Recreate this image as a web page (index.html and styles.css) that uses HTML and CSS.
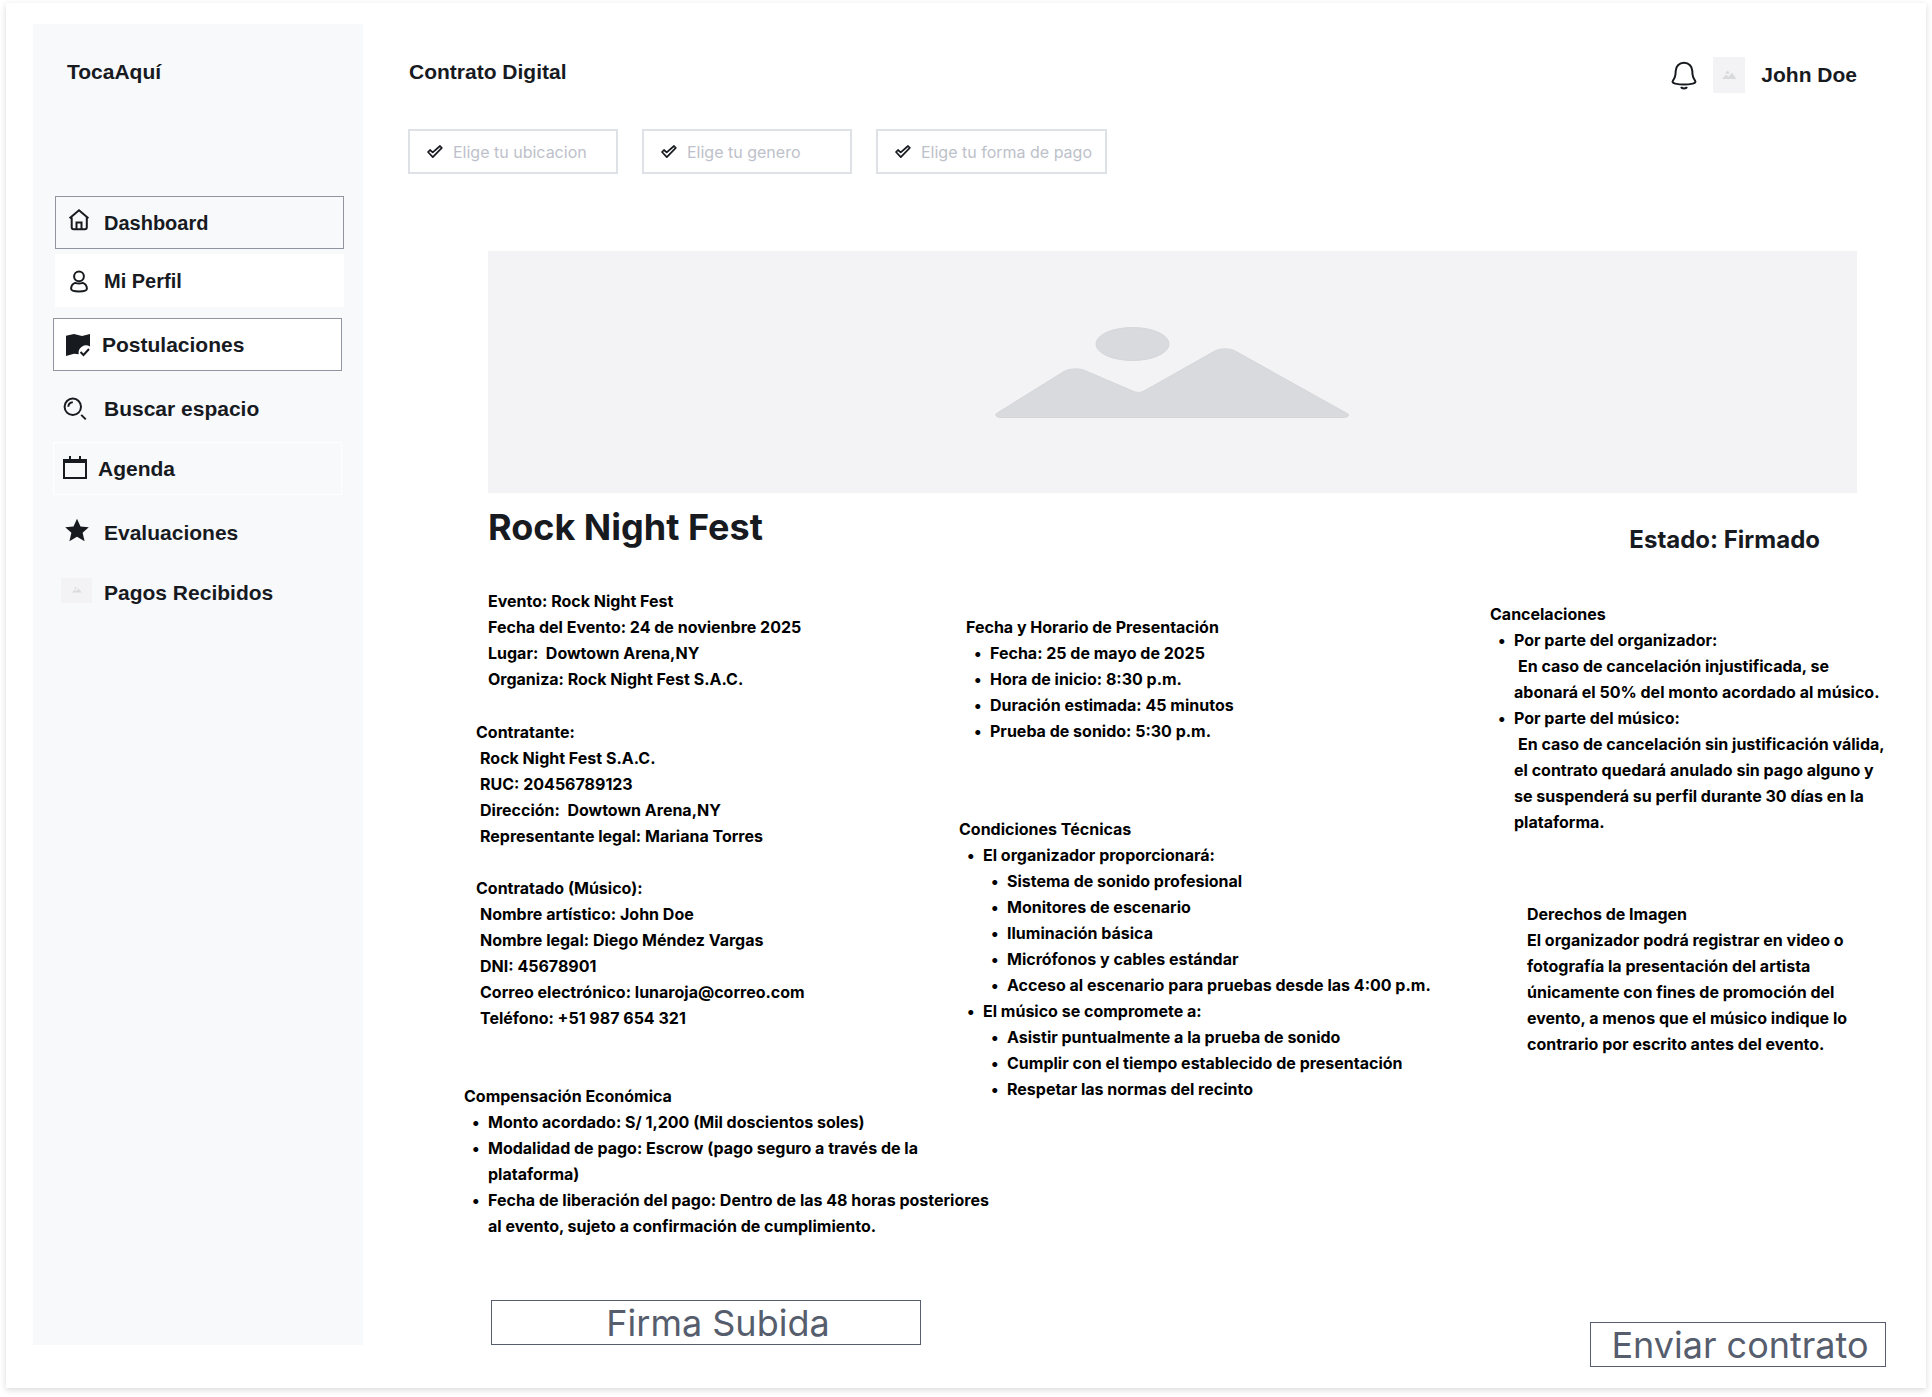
FILE: index.html
```html
<!DOCTYPE html>
<html lang="es">
<head>
<meta charset="utf-8">
<meta name="viewport" content="width=device-width, initial-scale=1">
<title>TocaAquí – Contrato Digital</title>
<link rel="stylesheet" href="styles.css">
</head>
<body>
<div class="card">
  <aside class="sidebar">
    <p class="brand">TocaAquí</p>
    <nav class="nav" aria-label="Principal">
      <a class="nav-item boxed compact" href="#">
        <svg class="nav-icon line" viewBox="0 0 32 31" aria-hidden="true"><path d="M6.600 11.300 16 3.200l9.400 8.100M8.700 10.500v9.800a2 2 0 0 0 2 2h11.100a2 2 0 0 0 2-2v-9.800M13.500 22v-6.600h5V22"/></svg>
        <span>Dashboard</span>
      </a>
      <a class="nav-item filled compact" href="#">
        <svg class="nav-icon line" viewBox="0 0 32 31" aria-hidden="true"><circle cx="16" cy="11.300" r="4.900"/><path d="M12.300 17.900c-2.700.9-4.200 3-4.200 5.800 0 1.900 3 2.700 7.900 2.700s7.900-.8 7.900-2.700c0-2.800-1.500-4.900-4.200-5.800-2.300.8-5.100.8-7.400 0z"/></svg>
        <span>Mi Perfil</span>
      </a>
      <a class="nav-item boxed filled outset spaced" href="#">
        <svg class="nav-icon" viewBox="0 0 32 31" aria-hidden="true"><path fill="#171a1f" d="M5 6.800 13 5l8 2 8-2v12.500a7.500 7.500 0 0 0-11.300 7.800L13 24.800l-8 2.200z"/><path class="stroke" d="m19.500 23 3 3 5.500-6"/></svg>
        <span>Postulaciones</span>
      </a>
      <a class="nav-item spaced" href="#">
        <svg class="nav-icon line" viewBox="0 0 32 31" aria-hidden="true"><circle cx="9.800" cy="13.800" r="8.200"/><path d="M5.300 13.800a4.800 4.800 0 0 1 4.500-4.500M18.200 21.900l4.600 4.500"/></svg>
        <span>Buscar espacio</span>
      </a>
      <a class="nav-item boxed pale outset tight" href="#">
        <svg class="nav-icon" viewBox="0 0 32 31" aria-hidden="true"><path fill="#171a1f" fill-rule="evenodd" d="M2 6h6V3h2v3h8V3h2v3h6v20H2zM4 10v14h20V10z"/></svg>
        <span>Agenda</span>
      </a>
      <a class="nav-item spaced" href="#">
        <svg class="nav-icon" viewBox="0 0 32 31" aria-hidden="true"><path fill="#171a1f" d="m14 1.800 3.500 7.600 8.300.9-6.200 5.500 2 8.500-7.600-4.500-7.600 4.500 2-8.500-6.200-5.500 8.300-.9z"/></svg>
        <span>Evaluaciones</span>
      </a>
      <a class="nav-item tight-top" href="#">
        <svg class="nav-icon" viewBox="0 0 32 31" aria-hidden="true"><path fill="#f3f3f5" d="M-2 1h31v25H-2z"/><path fill="#d9dade" d="m9 15.500 2.500-2.700 1.800 1.400 2.200-2.800 3.300 4.100z"/><circle cx="12.500" cy="11.300" r="1" fill="#d9dade"/></svg>
        <span>Pagos Recibidos</span>
      </a>
    </nav>
  </aside>

  <main class="main">
    <header class="header">
      <h1 class="page-title">Contrato Digital</h1>
      <div class="user">
        <button class="bell" type="button" aria-label="Notificaciones">
          <svg viewBox="0 0 28 30" aria-hidden="true"><path class="stroke" d="M14 2.800c-5 0-8.300 3.600-8.300 8.300 0 4.900-.6 6.700-2.600 9.200-1.600 2 .4 2.900 2.100 3.300 5.600 1.300 12 1.300 17.600 0 1.700-.4 3.700-1.300 2.100-3.300-2-2.500-2.600-4.300-2.600-9.200 0-4.700-3.300-8.300-8.300-8.300zM11 27c.8 1.900 5.200 1.900 6 0"/></svg>
        </button>
        <svg class="avatar" viewBox="0 0 32 36" aria-hidden="true"><path fill="#f3f3f5" d="M0 0h32v36H0z"/><path fill="#d9dade" d="m9 22 4-4.500 2.500 2.300L19 15.700l4.300 6.300z"/><circle cx="14.500" cy="15.500" r="1.600" fill="#d9dade"/></svg>
        <span class="user-name">John Doe</span>
      </div>
    </header>

    <form class="filters">
      <label class="filter">
        <svg class="check" viewBox="0 0 18 16" aria-hidden="true"><path d="m2 8 2-2 2.700 2.400L14 2l1.800 1.800-9 9.400z"/></svg>
        <input type="text" placeholder="Elige tu ubicacion" aria-label="Ubicacion">
      </label>
      <label class="filter">
        <svg class="check" viewBox="0 0 18 16" aria-hidden="true"><path d="m2 8 2-2 2.700 2.400L14 2l1.800 1.800-9 9.400z"/></svg>
        <input type="text" placeholder="Elige tu genero" aria-label="Genero">
      </label>
      <label class="filter wide">
        <svg class="check" viewBox="0 0 18 16" aria-hidden="true"><path d="m2 8 2-2 2.700 2.400L14 2l1.800 1.800-9 9.400z"/></svg>
        <input type="text" placeholder="Elige tu forma de pago" aria-label="Forma de pago">
      </label>
    </form>

    <div class="hero">
      <svg class="hero-art" viewBox="0 0 355 91" aria-hidden="true"><g fill="#d9dade" stroke="#d5d6da"><ellipse cx="137.500" cy="17" rx="36.500" ry="16.500"/><path d="M1.500 86.500 69 44.500c6-3.500 17-3.500 23 0l48 20.500q5 1.500 9-1l70-39.500c5-3.500 17-3.500 22 0l112 62.500q2 2.500-4 3.500H5q-6-1-3.500-4z"/></g></svg>
    </div>

    <div class="event-head">
      <h2 class="event-title">Rock Night Fest</h2>
      <p class="status">Estado: Firmado</p>
    </div>

    <div class="contract">
      <div class="column">
        <section class="block indent-2">
          <p>Evento: Rock Night Fest</p>
          <p>Fecha del Evento: 24 de novienbre 2025</p>
          <p>Lugar:&nbsp; Dowtown Arena,NY</p>
          <p>Organiza: Rock Night Fest S.A.C.</p>
        </section>
        <section class="block indent-1 party">
          <h3>Contratante:</h3>
          <p>Rock Night Fest S.A.C.</p>
          <p>RUC: 20456789123</p>
          <p>Dirección:&nbsp; Dowtown Arena,NY</p>
          <p>Representante legal: Mariana Torres</p>
        </section>
        <section class="block indent-1 party">
          <h3>Contratado (Músico):</h3>
          <p>Nombre artístico: John Doe</p>
          <p>Nombre legal: Diego Méndez Vargas</p>
          <p>DNI: 45678901</p>
          <p>Correo electrónico: lunaroja@correo.com</p>
          <p>Teléfono: +51 987 654 321</p>
        </section>
        <section class="block payment">
          <h3>Compensación Económica</h3>
          <ul>
            <li>Monto acordado: S/ 1,200 (Mil doscientos soles)</li>
            <li>Modalidad de pago: Escrow (pago seguro a través de la plataforma)</li>
            <li>Fecha de liberación del pago: Dentro de las 48 horas posteriores al evento, sujeto a confirmación de cumplimiento.</li>
          </ul>
        </section>
      </div>

      <div class="column middle">
        <section class="block schedule">
          <h3>Fecha y Horario de Presentación</h3>
          <ul>
            <li>Fecha: 25 de mayo de 2025</li>
            <li>Hora de inicio: 8:30 p.m.</li>
            <li>Duración estimada: 45 minutos</li>
            <li>Prueba de sonido: 5:30 p.m.</li>
          </ul>
        </section>
        <section class="block">
          <h3>Condiciones Técnicas</h3>
          <ul>
            <li>El organizador proporcionará:
              <ul>
                <li>Sistema de sonido profesional</li>
                <li>Monitores de escenario</li>
                <li>Iluminación básica</li>
                <li>Micrófonos y cables estándar</li>
                <li>Acceso al escenario para pruebas desde las 4:00 p.m.</li>
              </ul>
            </li>
            <li>El músico se compromete a:
              <ul>
                <li>Asistir puntualmente a la prueba de sonido</li>
                <li>Cumplir con el tiempo establecido de presentación</li>
                <li>Respetar las normas del recinto</li>
              </ul>
            </li>
          </ul>
        </section>
      </div>

      <div class="column right">
        <section class="block">
          <h3>Cancelaciones</h3>
          <ul>
            <li>Por parte del organizador:<p class="clause">En caso de cancelación injustificada, se abonará el 50% del monto acordado al músico.</p></li>
            <li>Por parte del músico:<p class="clause">En caso de cancelación sin justificación válida, el contrato quedará anulado sin pago alguno y se suspenderá su perfil durante 30 días en la plataforma.</p></li>
          </ul>
        </section>
        <section class="block rights">
          <h3>Derechos de Imagen</h3>
          <p>El organizador podrá registrar en video o fotografía la presentación del artista únicamente con fines de promoción del evento, a menos que el músico indique lo contrario por escrito antes del evento.</p>
        </section>
      </div>
    </div>

    <div class="actions">
      <button class="action sign" type="button">Firma Subida</button>
      <button class="action send" type="button">Enviar contrato</button>
    </div>
  </main>
</div>
</body>
</html>
```
FILE: styles.css
```css
* {
  box-sizing: border-box;
}

body {
  margin: 0;
  padding: 3px 6px 9px;
  background: #fff;
  color: #171a1f;
  font-family: Inter, "Liberation Sans", sans-serif;
  font-size: 16px;
  line-height: 26px;
}

h1, h2, h3, p, ul {
  margin: 0;
  padding: 0;
  font-size: inherit;
}

.card {
  display: flex;
  padding: 21px 0 21px 27px;
  background: #fff;
  box-shadow: 0 2px 6px rgba(23, 26, 31, 0.16);
}

/* Sidebar */

.sidebar {
  flex: none;
  width: 330px;
  margin-bottom: 22px;
  padding: 33px 19px 33px 22px;
  background: #f8f9fb;
}

.brand,
.nav-item,
.page-title,
.user-name {
  font-family: "Liberation Sans", Arial, sans-serif;
  font-size: 21px;
  font-weight: 700;
  line-height: 30px;
}

.brand {
  padding-left: 12px;
}

.nav {
  display: flex;
  flex-direction: column;
  margin-top: 109px;
}

.nav-item {
  display: flex;
  align-items: center;
  gap: 9px;
  height: 53px;
  padding-left: 7px;
  border: 1px solid transparent;
  color: inherit;
  text-decoration: none;
}

.nav-item + .nav-item {
  margin-top: 5px;
}

.nav-item.compact {
  font-size: 20px;
}

.nav-item.boxed {
  border-color: #9095a0;
}

.nav-item.filled {
  background: #fff;
}

.nav-item.pale {
  border-color: #fff;
}

.nav-item.outset {
  margin-right: 2px;
  margin-left: -2px;
}

.nav-item + .nav-item.spaced {
  margin-top: 11px;
}

.nav-item + .nav-item.tight,
.nav-item + .nav-item.tight-top {
  margin-top: 7px;
}

.nav-item.tight {
  gap: 5px;
}

.nav-icon {
  flex: none;
  width: 32px;
  height: 31px;
  overflow: visible;
}

.line,
.stroke {
  fill: none;
  stroke: #171a1f;
  stroke-width: 2;
}

/* Header */

.main {
  flex: 1;
  min-width: 0;
  padding: 33px 0 0 46px;
}

.header {
  display: flex;
  align-items: flex-start;
  justify-content: space-between;
  padding-right: 69px;
}

.user {
  display: flex;
  align-items: center;
}

.bell {
  width: 28px;
  height: 30px;
  margin-right: 15px;
  padding: 0;
  border: 0;
  background: none;
}

.bell svg {
  display: block;
}

.avatar {
  width: 32px;
  height: 36px;
  margin-right: 16px;
}

/* Filters */

.filters {
  display: flex;
  gap: 24px;
  margin: 36px 0 0 -1px;
}

.filter {
  display: flex;
  align-items: center;
  gap: 9px;
  width: 210px;
  height: 45px;
  padding: 0 12px 0 16px;
  border: 2px solid #dee1e6;
}

.filter.wide {
  width: 231px;
}

.check {
  flex: none;
  width: 18px;
  height: 16px;
  fill: none;
  stroke: #171a1f;
  stroke-width: 1.7;
  stroke-linejoin: round;
}

.filter input {
  width: 100%;
  min-width: 0;
  padding: 0;
  border: 0;
  outline: 0;
  background: none;
  color: inherit;
  font: 400 16px/26px Inter, "Liberation Sans", sans-serif;
}

.filter input::placeholder {
  color: #bdc1ca;
  opacity: 1;
}

/* Event */

.hero {
  display: flex;
  align-items: center;
  justify-content: center;
  height: 242px;
  margin: 77px 69px 0 79px;
  background: #f3f3f5;
}

.hero-art {
  width: 355px;
  height: 91px;
}

.event-head {
  display: flex;
  align-items: flex-end;
  justify-content: space-between;
  margin: 10px 106px 0 79px;
  font-weight: 700;
}

.event-title {
  font-size: 36px;
  line-height: 48px;
}

.status {
  font-size: 24px;
  line-height: 22px;
}

/* Contract terms */

.contract {
  display: grid;
  grid-template-columns: 495fr 531fr 398fr;
  margin: 37px 38px 0 55px;
  color: #000;
  font-weight: 700;
}

.block h3 {
  font-weight: inherit;
}

.block ul {
  padding-left: 24px;
  list-style: none;
}

.block li::before {
  content: "•";
  display: inline-block;
  width: 16px;
  margin-left: -16px;
}

.party {
  margin-top: 26px;
}

.indent-1 {
  padding-left: 12px;
}

.indent-2 {
  padding: 0 0 1px 24px;
}

.party p {
  padding-left: 4px;
}

.payment {
  margin: 52px -40px 0 0;
}

.middle {
  padding-top: 26px;
}

.schedule {
  margin-bottom: 72px;
  padding-left: 7px;
}

.right {
  padding-top: 13px;
}

.clause {
  text-indent: 4px;
}

.rights {
  margin-top: 66px;
  padding: 0 36px 0 37px;
}

/* Actions */

.actions {
  display: flex;
  align-items: flex-start;
  justify-content: space-between;
  margin: 61px 40px 0 82px;
}

.action {
  height: 45px;
  border: 1px solid #565d6d;
  background: #fff;
  color: #565d6d;
  font: 400 36px/42px Inter, "Liberation Sans", sans-serif;
}

.sign {
  width: 430px;
  padding: 0 0 0 24px;
}

.send {
  width: 296px;
  margin-top: 22px;
  padding: 0 0 0 4px;
}
```
